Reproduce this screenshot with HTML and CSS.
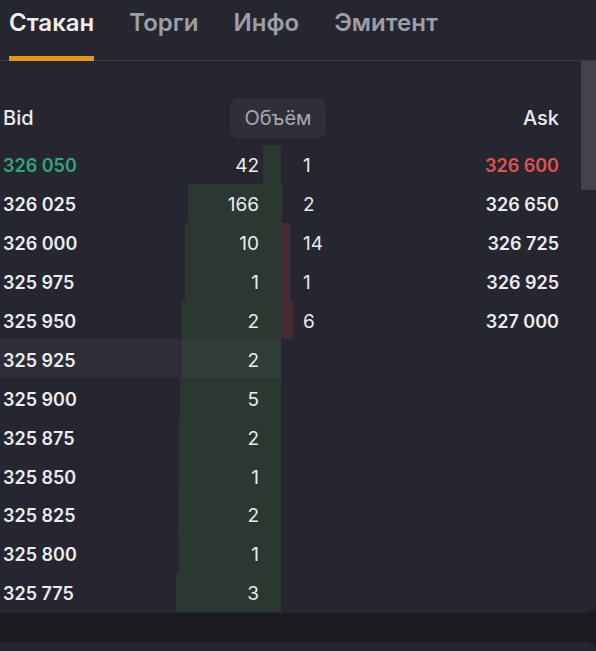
FILE: index.html
```html
<!DOCTYPE html>
<html lang="ru">

<head>
    <meta charset="UTF-8">
    <meta name="viewport" content="width=device-width, initial-scale=1.0">
    <title>Стакан</title>
    <link rel="stylesheet" href="styles.css">
</head>

<body>
    <div class="panel">
        <!-- Tabs -->
        <div class="tabs">
            <div class="tab tab_active">Стакан</div>
            <div class="tab">Торги</div>
            <div class="tab">Инфо</div>
            <div class="tab">Эмитент</div>
        </div>

        <div class="book">
            <div class="scroll_thumb"></div>

            <div class="book_head">
                <span class="head_bid">Bid</span>
                <span class="volume_pill">Объём</span>
                <span class="head_ask">Ask</span>
            </div>

            <div class="row">
                <div class="bid_side"><div class="bar bar_bid" style="width: 18px"></div><span class="price price_best_bid">326 050</span><span class="vol">42</span></div>
                <div class="ask_side"><div class="bar bar_ask" style="width: 0px"></div><span class="vol">1</span><span class="price price_best_ask">326 600</span></div>
            </div>
            <div class="row">
                <div class="bid_side"><div class="bar bar_bid" style="width: 93px"></div><span class="price">326 025</span><span class="vol">166</span></div>
                <div class="ask_side"><div class="bar bar_ask" style="width: 1px"></div><span class="vol">2</span><span class="price">326 650</span></div>
            </div>
            <div class="row">
                <div class="bid_side"><div class="bar bar_bid" style="width: 96px"></div><span class="price">326 000</span><span class="vol">10</span></div>
                <div class="ask_side"><div class="bar bar_ask" style="width: 9px"></div><span class="vol">14</span><span class="price">326 725</span></div>
            </div>
            <div class="row">
                <div class="bid_side"><div class="bar bar_bid" style="width: 96px"></div><span class="price">325 975</span><span class="vol">1</span></div>
                <div class="ask_side"><div class="bar bar_ask" style="width: 9px"></div><span class="vol">1</span><span class="price">326 925</span></div>
            </div>
            <div class="row">
                <div class="bid_side"><div class="bar bar_bid" style="width: 99px"></div><span class="price">325 950</span><span class="vol">2</span></div>
                <div class="ask_side"><div class="bar bar_ask" style="width: 12px"></div><span class="vol">6</span><span class="price">327 000</span></div>
            </div>
            <div class="row">
                <div class="bid_side bid_hover"><div class="bar bar_bid" style="width: 99px"></div><span class="price">325 925</span><span class="vol">2</span></div>
                <div class="ask_side"></div>
            </div>
            <div class="row">
                <div class="bid_side"><div class="bar bar_bid" style="width: 101px"></div><span class="price">325 900</span><span class="vol">5</span></div>
                <div class="ask_side"></div>
            </div>
            <div class="row">
                <div class="bid_side"><div class="bar bar_bid" style="width: 102px"></div><span class="price">325 875</span><span class="vol">2</span></div>
                <div class="ask_side"></div>
            </div>
            <div class="row">
                <div class="bid_side"><div class="bar bar_bid" style="width: 102px"></div><span class="price">325 850</span><span class="vol">1</span></div>
                <div class="ask_side"></div>
            </div>
            <div class="row">
                <div class="bid_side"><div class="bar bar_bid" style="width: 103px"></div><span class="price">325 825</span><span class="vol">2</span></div>
                <div class="ask_side"></div>
            </div>
            <div class="row">
                <div class="bid_side"><div class="bar bar_bid" style="width: 102px"></div><span class="price">325 800</span><span class="vol">1</span></div>
                <div class="ask_side"></div>
            </div>
            <div class="row">
                <div class="bid_side"><div class="bar bar_bid" style="width: 105px"></div><span class="price">325 775</span><span class="vol">3</span></div>
                <div class="ask_side"></div>
            </div>
        </div>
    </div>

    <!-- next panel, only its top edge is visible -->
    <div class="panel_next"></div>
</body>

</html>
```

FILE: styles.css
```css
body {
    margin: 0;
    background-color: #1c1c20;
    font-family: "Inter", "Noto Sans", sans-serif;
    color: #ebebf0;
    overflow: hidden;
}

.panel {
    background-color: #25262f;
    border-radius: 0 0 10px 0;
    height: 613px;
}

/* Tabs */
.tabs {
    display: flex;
    height: 61px;
    border-bottom: 1px solid #383943;
    box-sizing: border-box;
    padding-left: 9px;
    gap: 35px;
}

.tab {
    font-size: 24px;
    font-weight: 600;
    color: #9c9ea9;
    padding-top: 8px;
    line-height: 30px;
    box-sizing: border-box;
    height: 61px;
}

.tab_active {
    color: #eeeef2;
    border-bottom: 5px solid #e0961c;
}

/* Order book */
.book {
    position: relative;
    width: 581px;
}

.scroll_thumb {
    position: absolute;
    left: 581px;
    top: 0;
    width: 15px;
    height: 129px;
    background-color: #42434b;
}

.book_head {
    display: grid;
    grid-template-columns: 1fr auto 1fr;
    align-items: center;
    padding: 37px 22px 0 3px;
    height: 40px;
    margin-bottom: 7px;
}

.head_bid,
.head_ask {
    font-size: 20px;
    font-weight: 500;
}

.head_ask {
    text-align: right;
}

.volume_pill {
    background-color: #2e2f38;
    color: #a6a7ae;
    font-size: 20px;
    padding: 0 14px;
    height: 40px;
    line-height: 40px;
    border-radius: 8px;
    margin-right: 6px;
}

.row {
    display: grid;
    grid-template-columns: 281px 300px;
    height: 38.9px;
    font-size: 18px;
}

.bid_side,
.ask_side {
    position: relative;
    display: flex;
    align-items: center;
    justify-content: space-between;
}

.bid_side {
    padding: 0 22px 0 3px;
}

.ask_side {
    padding: 0 22px;
}

.bid_hover {
    background-color: #2f2e38;
}

.bar {
    position: absolute;
    top: 0;
    bottom: 0;
}

.bar_bid {
    right: 0;
    background-color: #2d3732;
}

.bid_hover .bar_bid {
    background-color: #323c38;
}

.bar_ask {
    left: 0;
    background-color: #472a31;
}

.price,
.vol {
    position: relative;
    padding-top: 3px;
}

.price {
    font-weight: 600;
}

.vol {
    font-size: 19px;
    font-weight: 400;
}

.price_best_bid {
    color: #30a67b;
}

.price_best_ask {
    color: #e35253;
}

.panel_next {
    margin-top: 29px;
    height: 40px;
    background-color: #25262f;
    border-radius: 0 10px 0 0;
}
```
